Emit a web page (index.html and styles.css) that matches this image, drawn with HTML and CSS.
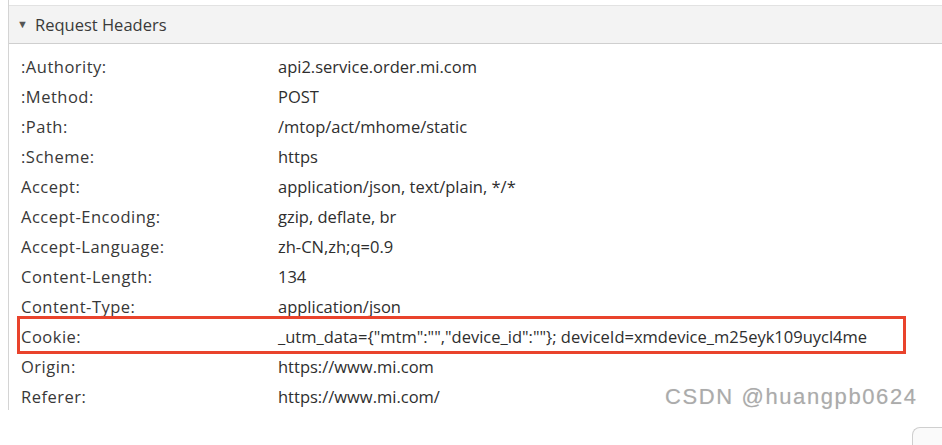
FILE: index.html
```html
<!DOCTYPE html>
<html>
<head>
<meta charset="utf-8">
<link rel="stylesheet" href="styles.css">
</head>
<body>
<div class="panel">
  <div class="header"><span class="caret">▼</span><span class="title">Request Headers</span></div>
  <div class="rows">
    <div class="row"><span class="k">:Authority:</span><span class="v">api2.service.order.mi.com</span></div>
    <div class="row"><span class="k">:Method:</span><span class="v">POST</span></div>
    <div class="row"><span class="k">:Path:</span><span class="v">/mtop/act/mhome/static</span></div>
    <div class="row"><span class="k">:Scheme:</span><span class="v">https</span></div>
    <div class="row"><span class="k">Accept:</span><span class="v">application/json, text/plain, */*</span></div>
    <div class="row"><span class="k">Accept-Encoding:</span><span class="v">gzip, deflate, br</span></div>
    <div class="row"><span class="k">Accept-Language:</span><span class="v">zh-CN,zh;q=0.9</span></div>
    <div class="row"><span class="k">Content-Length:</span><span class="v">134</span></div>
    <div class="row"><span class="k">Content-Type:</span><span class="v">application/json</span></div>
    <div class="row row-hl"><span class="k">Cookie:</span><span class="v">_utm_data={"mtm":"","device_id":""}; deviceId=xmdevice_m25eyk109uycl4me</span></div>
    <div class="row"><span class="k">Origin:</span><span class="v">https://www.mi.com</span></div>
    <div class="row"><span class="k">Referer:</span><span class="v">https://www.mi.com/</span></div>
  </div>
</div>
<div class="watermark">CSDN @huangpb0624</div>
<div class="corner-btn"></div>
</body>
</html>
```
FILE: styles.css
```css
html, body {
  margin: 0;
  padding: 0;
  background: #ffffff;
  overflow: hidden;
}
body {
  width: 942px;
  height: 445px;
  position: relative;
  font-family: "Open Sans", "Noto Sans", sans-serif;
  color: #333;
}
.panel {
  margin-left: 8px;
  border-left: 1px solid #d4d4d4;
  padding-top: 5px;
  height: 405px;
}
.header {
  border-top: 1px solid #e2e2e2;
  border-bottom: 1px solid #cfcfcf;
  background: #f3f3f3;
  height: 37px;
  display: flex;
  align-items: center;
  padding-left: 8px;
  font-size: 16.5px;
  color: #3a3a3a;
}
.caret {
  font-size: 11px;
  width: 18px;
  color: #555;
  position: relative;
  top: -1px;
}
.rows {
  padding-top: 7px;
  padding-left: 11px;
}
.row {
  display: grid;
  grid-template-columns: 257px 1fr;
  height: 30px;
  align-items: center;
  width: 883px;
  font-size: 16.5px;
  color: #383838;
  padding-left: 1px;
  box-sizing: border-box;
  white-space: nowrap;
}
.k {
  letter-spacing: 0.5px;
}
.v {
  color: #2e2e2e;
}
.row-hl {
  outline: 3px solid #e9432c;
  outline-offset: 0;
  height: 32px;
  margin-top: -2px;
  padding-top: 2px;
}
.watermark {
  position: absolute;
  left: 665px;
  top: 384px;
  font-family: "Liberation Sans", Arial, sans-serif;
  font-size: 22px;
  letter-spacing: 1.6px;
  color: #ababab;
  text-shadow: 0 0 1px #ddd;
}
.corner-btn {
  position: absolute;
  left: 912px;
  top: 427px;
  width: 30px;
  height: 18px;
  border-top: 1px solid #cfcfcf;
  border-left: 1px solid #cfcfcf;
  border-top-left-radius: 8px;
  background: #fafafa;
}
```
